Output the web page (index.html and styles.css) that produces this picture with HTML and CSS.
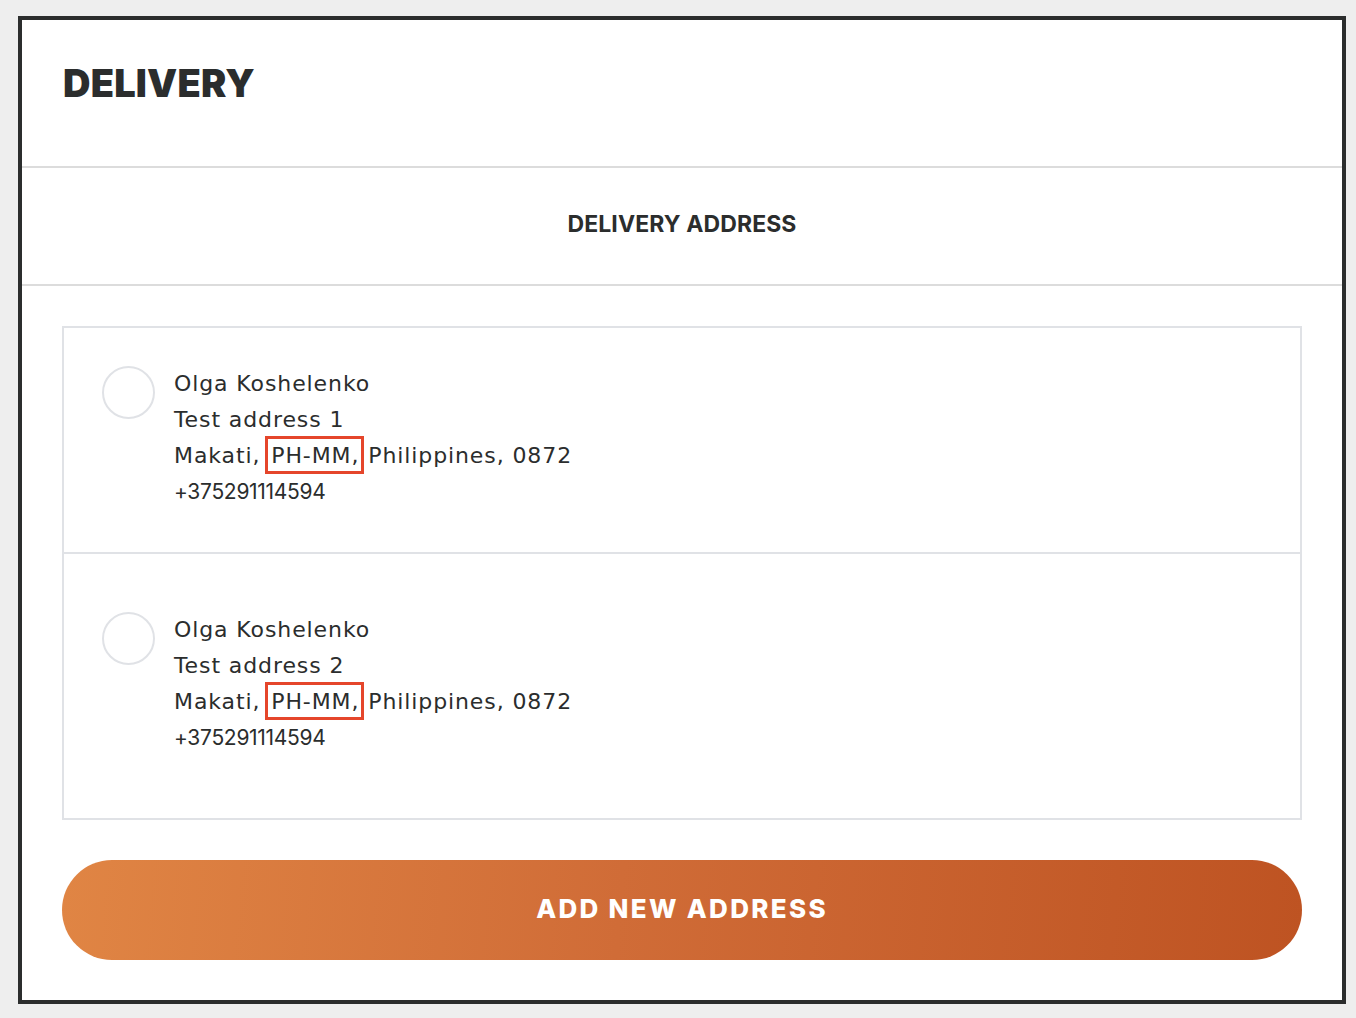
FILE: index.html
```html
<!DOCTYPE html>
<html lang="en">
<head>
<meta charset="utf-8">
<title>Delivery</title>
<link rel="stylesheet" href="styles.css">
</head>
<body>
<main class="frame">
  <header class="head">
    <h1 class="title">DELIVERY</h1>
  </header>
  <section class="sub">
    <h2 class="subtitle">DELIVERY ADDRESS</h2>
  </section>
  <section class="content">
    <div class="list">
      <label class="item item-first">
        <span class="radio"></span>
        <span class="addr">
          <span class="line">Olga Koshelenko</span>
          <span class="line">Test address 1</span>
          <span class="line">Makati, <span class="mark">PH-MM,</span> Philippines, 0872</span>
          <span class="line phone">+375291114594</span>
        </span>
      </label>
      <label class="item item-second">
        <span class="radio"></span>
        <span class="addr">
          <span class="line">Olga Koshelenko</span>
          <span class="line">Test address 2</span>
          <span class="line">Makati, <span class="mark">PH-MM,</span> Philippines, 0872</span>
          <span class="line phone">+375291114594</span>
        </span>
      </label>
    </div>
    <button class="btn" type="button">ADD NEW ADDRESS</button>
  </section>
</main>
</body>
</html>
```

FILE: styles.css
```css
html, body {
  margin: 0;
  padding: 0;
}
body {
  background: #eeeeee;
  padding: 16px 10px 0 18px;
  font-family: "Inter", "Lato", sans-serif;
  color: #2b2d2d;
}
.frame {
  width: 1320px;
  height: 980px;
  border: 4px solid #2b2d2d;
  background: #ffffff;
  display: flex;
  flex-direction: column;
}
.head {
  height: 146px;
  border-bottom: 2px solid #dcdcdc;
  padding: 0 41px;
  display: flex;
  align-items: flex-start;
}
.title {
  margin: 39px 0 0;
  font-size: 38px;
  line-height: 48px;
  font-weight: 900;
  letter-spacing: 0.2px;
}
.sub {
  height: 116px;
  border-bottom: 2px solid #dcdcdc;
  display: flex;
  align-items: center;
  justify-content: center;
}
.subtitle {
  margin: 0;
  font-size: 23px;
  font-weight: 700;
  line-height: 28px;
  padding-bottom: 4px;
  letter-spacing: 0.1px;
}
.content {
  padding: 40px;
  display: flex;
  flex-direction: column;
  gap: 40px;
}
.list {
  border: 2px solid #e0e2e6;
  display: flex;
  flex-direction: column;
}
.item {
  display: flex;
  gap: 19px;
  padding-left: 38px;
}
.item-first {
  padding-top: 38px;
  padding-bottom: 42px;
  border-bottom: 2px solid #e0e2e6;
}
.item-second {
  padding-top: 58px;
  padding-bottom: 62px;
}
.radio {
  width: 49px;
  height: 49px;
  border: 2px solid #e0e2e6;
  border-radius: 50%;
  flex: none;
  margin-top: 0;
}
.addr {
  display: flex;
  flex-direction: column;
  font-family: "DejaVu Sans", "Inter", sans-serif;
  font-size: 22px;
  line-height: 36px;
  font-weight: 400;
  letter-spacing: 0.9px;
}
.phone {
  font-family: "Inter", "DejaVu Sans", sans-serif;
  font-size: 21px;
  letter-spacing: -0.3px;
}
.mark {
  border: 3px solid #e5462b;
  padding: 4px 2px 3px 3px;
  margin: 0 -4px 0 -3px;
}
.btn {
  height: 100px;
  border: none;
  border-radius: 50px;
  background: linear-gradient(95deg, #e08544 0%, #d06c37 45%, #be5322 100%);
  color: #ffffff;
  font-family: "Inter", "Lato", sans-serif;
  font-size: 26px;
  font-weight: 800;
  letter-spacing: 2.3px;
  padding: 0 0 4px;
  cursor: pointer;
}
```
